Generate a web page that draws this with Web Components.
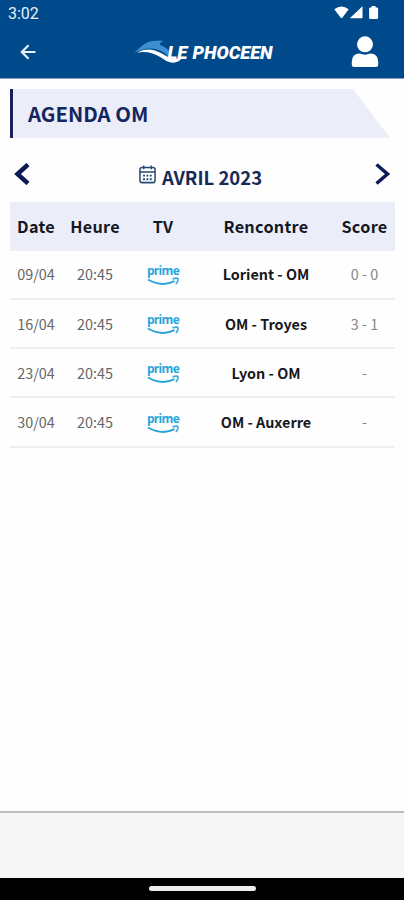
<!DOCTYPE html>
<html lang="fr">
<head>
<meta charset="utf-8">
<title>Agenda OM</title>
<style>
body {
  margin: 0;
  background: #fefefe;
  font-family: "Noto Sans CJK JP", "Noto Sans", sans-serif;
}
</style>
</head>
<body>
<lp-app>
  <lp-status-bar slot="top" time="3:02"></lp-status-bar>
  <lp-nav-bar slot="top"></lp-nav-bar>
  <lp-page-title>AGENDA OM</lp-page-title>
  <lp-month-picker>AVRIL 2023</lp-month-picker>
  <lp-agenda></lp-agenda>
  <lp-bottom-bar slot="bottom"></lp-bottom-bar>
</lp-app>

<script>
// Attach an open shadow root filled with styles and markup.
function render(el, css, html) {
  el.attachShadow({ mode: "open" }).innerHTML = `<style>${css}</style>${html}`;
}

/* lp-app: full-height column, fixed bars above and below the page content */
class LpApp extends HTMLElement {
  constructor() {
    super();
    render(this, `
:host { display: flex; flex-direction: column; height: 900px; overflow: hidden; }
main { flex: 1; padding: 11px 9px 0 10px; }
`, `<slot name="top"></slot><main><slot></slot></main><slot name="bottom"></slot>`);
  }
}

/* lp-status-bar: clock plus wifi, signal and battery */
class LpStatusBar extends HTMLElement {
  connectedCallback() {
    render(this, `
:host {
  display: flex;
  justify-content: space-between;
  align-items: center;
  height: 26px;
  box-sizing: border-box;
  padding: 0 25px 0 8px;
  background: #004a8b;
  color: #e6f0fa;
  font: 400 16px/27px Roboto, sans-serif;
}
svg { display: block; }
`, `
<span>${this.getAttribute("time")}</span>
<svg width="45" height="14" viewBox="0 0 45 14" fill="#fff" aria-hidden="true">
  <path d="M.3 3.2Q7.5-2 14.7 3.2L8.5 11.4Q7.5 12.5 6.5 11.4Z"/>
  <path d="M28.5.2V12.2H15.8Z"/>
  <path d="M37.6 0h4v1.4h1.2q1.3 0 1.3 1.3v9q0 1.2-1.3 1.2h-6.4q-1.3 0-1.3-1.2v-9q0-1.3 1.3-1.3h1.2Z"/>
</svg>`);
  }
}

/* lp-nav-bar: back arrow, logo, account */
class LpNavBar extends HTMLElement {
  constructor() {
    super();
    render(this, `
:host {
  display: flex;
  align-items: center;
  height: 53px;
  box-sizing: border-box;
  padding: 0 25px 1px 19px;
  background: #004a8b;
  border-bottom: 1px solid #8a9cc5;
}
svg { display: block; }
.logo { margin: 0 auto 0 96px; }
.logo text { font: italic 900 18px/1 Roboto, sans-serif; }
`, `
<svg width="18" height="18" viewBox="0 0 18 18" fill="none" stroke="#e8f2fb" stroke-width="2.2" aria-label="Retour">
  <path d="M16.5 9H3.200M9.500 2.300L2.800 9l6.700 6.700"/>
</svg>
<svg class="logo" width="146" height="30" viewBox="0 -2 146 30" aria-label="Le Phocéen">
  <path fill="#3e8ed2" d="M1 14C7 9 11 3 20 2Q26 1 31 2Q26 3.500 27 6Q33 8 36 12L35 17Q28 10 19 9.500Q10 9 1 14Z"/>
  <path fill="#fff" d="M4 13.500Q13 8.500 22 11.500Q29 14 34 17.500Q40 20.500 49 19Q45 24.500 38 23.500Q33 22.500 28 18.500Q17 11 4 13.500Z"/>
  <g fill="#fff">
    <text x="34.500" y="19.500" textLength="20" lengthAdjust="spacingAndGlyphs">LE</text>
    <text x="59.500" y="19.500" textLength="80" lengthAdjust="spacingAndGlyphs">PHOCEEN</text>
  </g>
</svg>
<svg width="28" height="32" viewBox="0 0 28 32" fill="#fff" aria-label="Compte">
  <circle cx="14" cy="8.300" r="8"/>
  <path d="M.8 28.500V26q0-8.500 8-8.500Q14 19.800 19.200 17.500q8 0 8 8.500v2.500q0 2.500-2.500 2.500H3.300Q.8 31 .8 28.500Z"/>
</svg>`);
  }
}

/* lp-page-title: heading on a slanted banner */
class LpPageTitle extends HTMLElement {
  constructor() {
    super();
    render(this, `
:host {
  display: block;
  height: 49px;
  margin: -1px 5px 0 0;
  box-sizing: border-box;
  padding-left: 15px;
  background: #ebedf9;
  border-left: 3px solid #1a2058;
  clip-path: polygon(0 0, 343px 0, 100% 100%, 0 100%);
}
h1 { margin: 0; font-size: 20.4px; font-weight: 700; line-height: 48px; color: #14265f; }
`, `<h1><slot></slot></h1>`);
  }
}

/* lp-month-picker: previous / current / next month */
class LpMonthPicker extends HTMLElement {
  constructor() {
    super();
    render(this, `
:host {
  display: flex;
  justify-content: space-between;
  align-items: flex-start;
  height: 64px;
  box-sizing: border-box;
  padding: 25px 3px 0 4px;
  color: #0d1b55;
}
svg { display: block; }
.month { display: flex; gap: 6px; margin-right: 5px; }
.calendar { margin-top: 2px; }
.label { font-size: 18.5px; font-weight: 700; line-height: 28px; color: #182957; }
`, `
<svg width="17" height="22" viewBox="0 0 17 22" fill="none" stroke="currentColor" stroke-width="4.500" aria-label="Mois précédent">
  <path d="M14 1.500L3.500 11L14 20.500"/>
</svg>
<div class="month">
  <svg class="calendar" width="17" height="19" viewBox="0 0 18 20" fill="none" stroke="#264a72" stroke-width="1.600" aria-hidden="true">
    <rect x="1" y="2.600" width="16" height="16" rx="2.200"/>
    <path d="M1 7.300h16M5 .5v4M13 .5v4"/>
    <path stroke-width="2" stroke-dasharray="2 1.600" d="M4.300 11.200h9.600M4.300 15h9.600"/>
  </svg>
  <span class="label"><slot></slot></span>
</div>
<svg width="17" height="22" viewBox="0 0 17 22" fill="none" stroke="currentColor" stroke-width="3.500" aria-label="Mois suivant">
  <path d="M1.500 1.500L12.500 11l-11 9.500"/>
</svg>`);
  }
}

/* lp-prime: broadcaster logo, wordmark over the smile arrow */
class LpPrime extends HTMLElement {
  constructor() {
    super();
    render(this, `
:host { display: inline-flex; flex-direction: column; align-items: center; vertical-align: middle; padding-bottom: 2px; }
span { font: 700 12px/20px "Open Sans", sans-serif; letter-spacing: -.7px; color: #25a5da; }
svg { display: block; margin-top: -4px; }
`, `
<span>prime</span>
<svg width="34" height="9" viewBox="0 0 34 9" fill="none" aria-hidden="true">
  <path d="M2 2.500Q16 10.500 28.500 4.200" stroke="#27a3d8" stroke-width="2"/>
  <path d="M26.500 1.900Q31 .4 32 1.700Q32.400 4 30 7" stroke="#3cacdc" stroke-width="1.700"/>
</svg>`);
  }
}

/* lp-agenda: fixtures of the month */
const MATCHES = [
  { date: "09/04", time: "20:45", match: "Lorient - OM", score: "0 - 0" },
  { date: "16/04", time: "20:45", match: "OM - Troyes", score: "3 - 1" },
  { date: "23/04", time: "20:45", match: "Lyon - OM", score: "-" },
  { date: "30/04", time: "20:45", match: "OM - Auxerre", score: "-" },
];

class LpAgenda extends HTMLElement {
  constructor() {
    super();
    const rows = MATCHES.map((m) => `<tr>
      <td>${m.date}</td><td>${m.time}</td><td><lp-prime></lp-prime></td>
      <td class="match">${m.match}</td><td class="score">${m.score}</td>
    </tr>`).join("");

    render(this, `
:host { display: block; }
table { width: 385px; border-collapse: separate; border-spacing: 0; table-layout: fixed; }
th, td { padding: 0; text-align: center; vertical-align: middle; white-space: nowrap; }
th { height: 48.6px; background: #ebedf9; font-size: 16.2px; font-weight: 700; line-height: 24px; color: #16181f; letter-spacing: .3px; }
td { height: 47.3px; border-bottom: 2px solid #edeef0; font-size: 14.4px; line-height: 20px; color: #666; }
.match { font-weight: 700; color: #16181c; }
.score { color: #858585; }
`, `
<table>
  <colgroup><col style="width:52px"><col style="width:66px"><col style="width:70px"><col style="width:136px"><col></colgroup>
  <thead><tr><th>Date</th><th>Heure</th><th>TV</th><th>Rencontre</th><th>Score</th></tr></thead>
  <tbody>${rows}</tbody>
</table>`);
  }
}

/* lp-bottom-bar: empty banner strip and the gesture handle */
class LpBottomBar extends HTMLElement {
  constructor() {
    super();
    render(this, `
:host { display: block; }
.strip { height: 67px; box-sizing: border-box; border-top: 2px solid #bcbcbc; background: #f6f6f6; }
.gesture { display: flex; justify-content: center; height: 22px; box-sizing: border-box; padding-top: 8px; background: #000; }
.handle { width: 107px; height: 5px; border-radius: 3px; background: #eee; }
`, `<div class="strip"></div><div class="gesture"><div class="handle"></div></div>`);
  }
}

customElements.define("lp-app", LpApp);
customElements.define("lp-status-bar", LpStatusBar);
customElements.define("lp-nav-bar", LpNavBar);
customElements.define("lp-page-title", LpPageTitle);
customElements.define("lp-month-picker", LpMonthPicker);
customElements.define("lp-prime", LpPrime);
customElements.define("lp-agenda", LpAgenda);
customElements.define("lp-bottom-bar", LpBottomBar);
</script>
</body>
</html>
